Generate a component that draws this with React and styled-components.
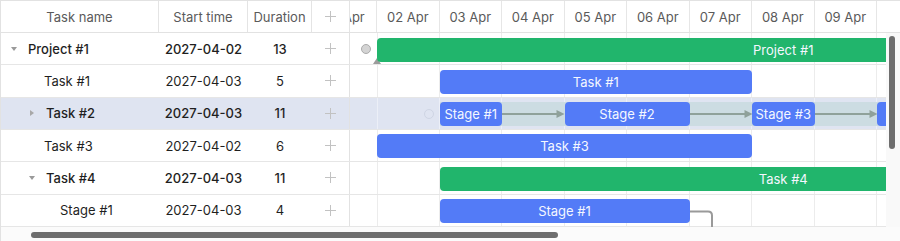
import styled, { createGlobalStyle } from "styled-components";

const DAY = 62.5;
const SCROLL = 35.5;
const ROW_H = 32.33;

const GlobalStyle = createGlobalStyle`
    html, body {
        margin: 0;
        background: #fff;
        font-family: Inter, "Noto Sans", sans-serif;
    }
`;

const Frame = styled.div`
    width: 899px;
    height: 240px;
    border-top: 1px solid #e2e2e2;
    border-left: 1px solid #e2e2e2;
    display: flex;
    flex-direction: column;
    overflow: hidden;
    font-size: 13px;
    color: #1f1f1f;
`;

const Main = styled.div`
    display: flex;
    flex: 1;
    min-height: 0;
`;

const TablePane = styled.div`
    width: 349px;
    flex: none;
    display: flex;
    flex-direction: column;
`;

const cols = "158px 89px 64px 38px";

const HeadRow = styled.div`
    display: grid;
    grid-template-columns: ${cols};
    height: 32px;
    border-bottom: 1px solid #e2e2e2;
    box-sizing: border-box;
`;

const HeadCell = styled.div`
    display: flex;
    align-items: center;
    justify-content: center;
    border-right: 1px solid #e4e4e4;
    color: #5a5a5a;
`;

const Row = styled.div`
    display: grid;
    grid-template-columns: ${cols};
    height: ${ROW_H}px;
    box-sizing: border-box;
    border-bottom: 1px solid #e6e6e6;
    background: ${(p) => (p.$selected ? "#dfe4f1" : "#fff")};
    font-weight: ${(p) => (p.$bold ? 500 : 400)};

    & > div:last-child {
        border-right: 1px solid #e2e2e2;
    }
`;

const NameCell = styled.div`
    display: flex;
    align-items: center;
    padding-left: ${(p) => p.$indent}px;
    white-space: nowrap;
`;

const Cell = styled.div`
    display: flex;
    align-items: center;
    justify-content: center;
`;

const Toggle = styled.span`
    width: 14px;
    height: 14px;
    margin-right: 7px;
    display: flex;
    align-items: center;
    justify-content: center;

    &::before {
        content: "";
        width: 0;
        height: 0;
        ${(p) =>
            p.$open
                ? `border-left: 3.5px solid transparent;
                   border-right: 3.5px solid transparent;
                   border-top: 4px solid #9a9a9a;`
                : `border-top: 3.5px solid transparent;
                   border-bottom: 3.5px solid transparent;
                   border-left: 4px solid #a8a8a8;`}
    }
`;

const Plus = () => (
    <svg width="11" height="11" viewBox="0 0 11 11">
        <path d="M5.5 0V11M0 5.5H11" stroke="#c2c2c2" strokeWidth="1" />
    </svg>
);

const ChartPane = styled.div`
    flex: 1;
    min-width: 0;
    display: flex;
    flex-direction: column;
`;

const TimeHead = styled.div`
    height: 32px;
    box-sizing: border-box;
    border-bottom: 1px solid #e2e2e2;
    display: flex;
`;

const Viewport = styled.div`
    width: 536px;
    flex: none;
    overflow: hidden;
    display: flex;
`;

const Track = styled.div`
    display: flex;
    flex-direction: column;
    margin-left: -${SCROLL}px;
    flex: none;
`;

const DayRow = styled.div`
    display: flex;
    height: 100%;
`;

const DayCell = styled.div`
    width: ${DAY}px;
    flex: none;
    box-sizing: border-box;
    border-right: 1px solid #e6e6e6;
    display: flex;
    align-items: center;
    justify-content: center;
    color: #5a5a5a;
    white-space: nowrap;
`;

const ChartBody = styled.div`
    display: flex;
    flex: 1;
`;

const ChartRow = styled.div`
    position: relative;
    width: ${DAY * 10}px;
    height: ${ROW_H}px;
    box-sizing: border-box;
    border-bottom: 1px solid #e6e6e6;
    background-color: ${(p) => (p.$selected ? "#dfe4f1" : "#fff")};
    background-image: repeating-linear-gradient(
        90deg,
        transparent 0 ${DAY - 1}px,
        ${(p) => (p.$selected ? "#eceff7" : "#ececec")} ${DAY - 1}px ${DAY}px
    );
`;

const Bar = styled.div`
    position: absolute;
    top: 4.5px;
    height: 24px;
    border-radius: 4px;
    background: ${(p) => (p.$kind === "project" ? "#21b56c" : "#537bf7")};
    color: #f4f7ff;
    display: flex;
    align-items: center;
    justify-content: center;
    white-space: nowrap;
    z-index: 1;
`;

const Band = styled.div`
    position: absolute;
    top: 4.5px;
    height: 24px;
    background: #ccdce2;
`;

const Marker = styled.svg`
    position: absolute;
    overflow: visible;
`;

const Gutter = styled.div`
    flex: 1;
    background: ${(p) => (p.$head ? "#fff" : "#f9f9f9")};
    display: flex;
    justify-content: center;
`;

const VThumb = styled.div`
    width: 6px;
    height: 113px;
    margin-top: 3px;
    margin-left: -2px;
    border-radius: 3px;
    background: #6e6e6e;
`;

const HScroll = styled.div`
    height: 14px;
    flex: none;
    background: #fbfbfb;
    padding-left: 30px;
`;

const HThumb = styled.div`
    width: 527px;
    height: 6px;
    margin-top: 4.5px;
    border-radius: 3px;
    background: #6e6e6e;
`;

const days = ["01", "02", "03", "04", "05", "06", "07", "08", "09", "10"];

const rows = [
    { name: "Project #1", start: "2027-04-02", dur: 13, indent: 6, toggle: "open", milestone: true, bar: { kind: "project", day: 1, len: 13 } },
    { name: "Task #1", start: "2027-04-03", dur: 5, indent: 43, bar: { kind: "task", day: 2, len: 5 } },
    {
        name: "Task #2", start: "2027-04-03", dur: 11, indent: 24, toggle: "closed", selected: true,
        band: { day: 2, len: 11 },
        stages: [
            { label: "Stage #1", day: 2, len: 1 },
            { label: "Stage #2", day: 4, len: 2 },
            { label: "Stage #3", day: 7, len: 1 },
            { label: "Stage #4", day: 9, len: 2 },
        ],
    },
    { name: "Task #3", start: "2027-04-02", dur: 6, indent: 43, bar: { kind: "task", day: 1, len: 6 } },
    { name: "Task #4", start: "2027-04-03", dur: 11, indent: 24, toggle: "open", bar: { kind: "project", day: 2, len: 11 } },
    { name: "Stage #1", start: "2027-04-03", dur: 4, indent: 59, bar: { kind: "task", day: 2, len: 4 }, link: true },
];

const place = (day, len) => ({ left: day * DAY, width: len * DAY });

const StageArrow = ({ from, to }) => (
    <Marker style={{ left: from, top: 16, width: to - from, height: 1 }}>
        <path d={`M0 0 H${to - from - 7}`} stroke="#8fa19a" strokeWidth="2" />
        <path d={`M${to - from - 8} -4 L${to - from} 0 L${to - from - 8} 4 Z`} fill="#8fa19a" />
    </Marker>
);

const ChartLine = ({ row }) => (
    <ChartRow $selected={row.selected}>
        {row.milestone && (
            <>
                <Marker style={{ left: 46, top: 11, width: 10, height: 10 }}>
                    <circle cx="5" cy="5" r="4.5" fill="#d4d4d4" stroke="#ababab" strokeWidth="1" />
                </Marker>
                <Marker style={{ left: 58.5, top: 25, width: 8, height: 6 }}>
                    <path d="M4 0 L8 6 L0 6 Z" fill="#9c9c9c" />
                </Marker>
            </>
        )}
        {row.band && (
            <>
                <Marker style={{ left: 109, top: 11.5, width: 10, height: 10 }}>
                    <circle cx="5" cy="5" r="4.5" fill="none" stroke="#cfd5e4" strokeWidth="1" />
                </Marker>
                <Band style={place(row.band.day, row.band.len)} />
            </>
        )}
        {row.stages &&
            row.stages.map((s) => (
                <Bar key={s.label} $kind="task" style={place(s.day, s.len)}>
                    {s.label}
                </Bar>
            ))}
        {row.stages &&
            row.stages.slice(1).map((s, i) => {
                const prev = row.stages[i];
                return <StageArrow key={i} from={(prev.day + prev.len) * DAY} to={s.day * DAY} />;
            })}
        {row.bar && (
            <Bar $kind={row.bar.kind} style={place(row.bar.day, row.bar.len)}>
                {row.name}
            </Bar>
        )}
        {row.link && (
            <Marker style={{ left: (row.bar.day + row.bar.len) * DAY, top: 0, width: 26, height: 33 }}>
                <path d="M0 16.5 H18 Q22 16.5 22 20.5 V40" fill="none" stroke="#9a9a9a" strokeWidth="2" />
            </Marker>
        )}
    </ChartRow>
);

export default function App() {
    return (
        <>
            <GlobalStyle />
            <Frame>
                <Main>
                    <TablePane>
                        <HeadRow>
                            <HeadCell>Task name</HeadCell>
                            <HeadCell>Start time</HeadCell>
                            <HeadCell>Duration</HeadCell>
                            <HeadCell>
                                <Plus />
                            </HeadCell>
                        </HeadRow>
                        {rows.map((row) => (
                            <Row key={row.name + row.start + row.indent} $selected={row.selected} $bold={!!row.toggle}>
                                <NameCell $indent={row.indent}>
                                    {row.toggle && <Toggle $open={row.toggle === "open"} />}
                                    {row.name}
                                </NameCell>
                                <Cell>{row.start}</Cell>
                                <Cell>{row.dur}</Cell>
                                <Cell>
                                    <Plus />
                                </Cell>
                            </Row>
                        ))}
                    </TablePane>
                    <ChartPane>
                        <TimeHead>
                            <Viewport>
                                <Track>
                                    <DayRow>
                                        {days.map((d) => (
                                            <DayCell key={d}>{d === "10" ? "" : `${d} Apr`}</DayCell>
                                        ))}
                                    </DayRow>
                                </Track>
                            </Viewport>
                            <Gutter $head />
                        </TimeHead>
                        <ChartBody>
                            <Viewport>
                                <Track>
                                    {rows.map((row) => (
                                        <ChartLine key={row.name + row.indent} row={row} />
                                    ))}
                                </Track>
                            </Viewport>
                            <Gutter>
                                <VThumb />
                            </Gutter>
                        </ChartBody>
                    </ChartPane>
                </Main>
                <HScroll>
                    <HThumb />
                </HScroll>
            </Frame>
        </>
    );
}
